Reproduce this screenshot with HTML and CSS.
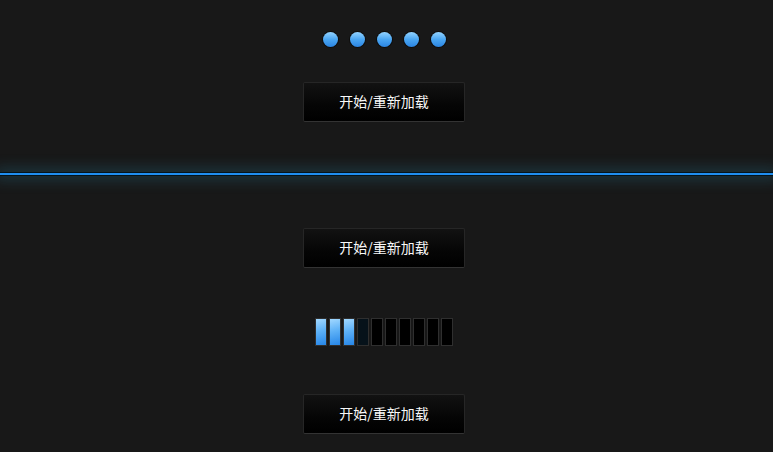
FILE: index.html
```html
<!DOCTYPE html>
<html lang="zh-CN">
<head>
<meta charset="utf-8">
<title>Loading</title>
<link rel="stylesheet" href="styles.css">
</head>
<body>
<div class="page">
  <div class="dots">
    <span class="dot"></span><span class="dot"></span><span class="dot"></span><span class="dot"></span><span class="dot"></span>
  </div>
  <button class="btn btn-first">开始/重新加载</button>
  <div class="divider"></div>
  <button class="btn btn-second">开始/重新加载</button>
  <div class="bars">
    <span class="bar on"></span><span class="bar on"></span><span class="bar on"></span><span class="bar fade"></span><span class="bar"></span><span class="bar"></span><span class="bar"></span><span class="bar"></span><span class="bar"></span><span class="bar"></span>
  </div>
  <button class="btn btn-third">开始/重新加载</button>
</div>
</body>
</html>
```

FILE: styles.css
```css
html, body {
  margin: 0;
  padding: 0;
  background: #181818;
  height: 100%;
  overflow: hidden;
}
.page {
  width: 768px;
  padding-top: 32px;
  display: flex;
  flex-direction: column;
  align-items: center;
  font-family: "Noto Sans CJK SC", "Noto Sans", sans-serif;
}
.dots {
  display: flex;
  gap: 12px;
  height: 15px;
}
.dot {
  width: 15px;
  height: 15px;
  border-radius: 50%;
  box-sizing: border-box;
  background: linear-gradient(to bottom, #93d3ff 0%, #4aa6f2 50%, #2a84e2 100%);
  box-shadow: 0 0 0 1px rgba(0,0,0,0.45);
}
.btn {
  width: 162px;
  height: 40px;
  box-sizing: border-box;
  border: 1px solid #262626;
  border-bottom-color: #333;
  border-radius: 2px;
  background: linear-gradient(to bottom, #121212 0%, #050505 60%, #000 100%);
  color: #f8f8f8;
  font-family: "Noto Sans CJK SC", "Noto Sans", sans-serif;
  font-size: 14px;
  padding: 0 0 2px;
  cursor: pointer;
}
.btn-first { margin-top: 35px; }
.divider {
  align-self: stretch;
  width: 773px;
  height: 2px;
  margin-top: 51px;
  background: #1f8ef0;
  box-shadow: 0 -1px 0 #04141c, 0 1px 0 #04141c, 0 0 14px 5px rgba(40, 130, 160, 0.3);
}
.btn-second { margin-top: 53px; }
.bars {
  display: flex;
  gap: 2px;
  margin-top: 50px;
  height: 28px;
}
.bar {
  width: 12px;
  height: 28px;
  box-sizing: border-box;
  border: 1px solid #2f2f2f;
  background: #000;
}
.bar.on {
  background: linear-gradient(165deg, #a2d8ff 0%, #5fb2f7 45%, #2686e8 100%);
}
.bar.fade {
  background: #06121a;
}
.btn-third { margin-top: 48px; }
```
